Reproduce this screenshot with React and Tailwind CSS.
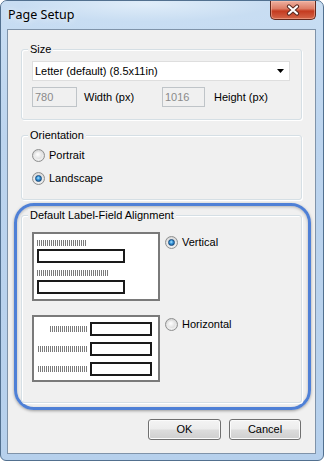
import React from "react";

const font = { fontFamily: '"Liberation Sans", Arial, sans-serif' };

function Radio({ checked }) {
  return (
    <div className="w-[13px] h-[13px] rounded-full border border-[#8e8f8f] bg-[radial-gradient(circle_at_50%_60%,#fafafa_0%,#ececec_45%,#c4c4c4_100%)] flex items-center justify-center shrink-0">
      {checked ? (
        <div className="w-[7px] h-[7px] rounded-full border border-[#174a7c] bg-[radial-gradient(circle_at_45%_40%,#aee6ff_0%,#3a98dc_40%,#0e4a86_100%)]" />
      ) : (
        <div className="w-[7px] h-[7px] rounded-full bg-[radial-gradient(circle_at_40%_35%,#ffffff_0%,#e6e6e6_60%,#d0d0d0_100%)]" />
      )}
    </div>
  );
}

function Group({ label, className, children }) {
  return (
    <div
      className={
        "relative border border-[#d5dfe5] rounded-[3px] shadow-[inset_1px_1px_0_#ffffff,1px_1px_0_#ffffff] " +
        className
      }
    >
      <div className="absolute -top-[7px] left-[6px] px-[2px] bg-[#f0f0f0] leading-[13px] text-[11px] text-black whitespace-nowrap">
        {label}
      </div>
      {children}
    </div>
  );
}

function Hatch({ w }) {
  return (
    <div
      className="h-[6px] shrink-0 bg-[repeating-linear-gradient(90deg,#7a7a7a_0px,#7a7a7a_1px,transparent_1px,transparent_2px)]"
      style={{ width: w }}
    />
  );
}

function Field({ w, h }) {
  return (
    <div
      className="border-2 border-[#1a1a1a] bg-white shrink-0"
      style={{ width: w, height: h }}
    />
  );
}

function Button({ children, w }) {
  return (
    <div
      className="h-[21px] flex items-center justify-center border border-[#707070] rounded-[3px] bg-[linear-gradient(180deg,#f4f4f4_0%,#ececec_48%,#dddddd_52%,#cfcfcf_100%)] shadow-[inset_0_0_0_1px_#fbfbfb] text-[11px] text-black"
      style={{ width: w }}
    >
      {children}
    </div>
  );
}

export default function App() {
  return (
    <div
      className="w-[324px] h-[461px] flex flex-col rounded-t-[7px] rounded-b-[6px] border border-[#52708f] bg-[linear-gradient(180deg,#c9def3_0%,#bcd4ee_30%,#b6d0ec_100%)] overflow-hidden"
      style={font}
    >
      {/* title bar */}
      <div className="h-[28px] flex items-start shrink-0 bg-[radial-gradient(ellipse_at_45%_10%,#e0edf9_0%,#c8ddf2_50%,transparent_80%)]">
        <div
          className="pl-[7px] h-[28px] flex items-center text-[12.5px] text-black"
          style={{ fontFamily: '"Noto Sans", "Open Sans", sans-serif', textShadow: "0 0 6px rgba(255,255,255,0.9)" }}
        >
          Page Setup
        </div>
        <div className="flex-1" />
        <div className="mr-[7px] w-[46px] h-[19px] flex items-center justify-center rounded-b-[5px] border border-t-0 border-[#62281d] bg-[linear-gradient(180deg,#eeb0a0_0%,#dd7d66_42%,#c43b20_56%,#d4664a_100%)] shadow-[inset_0_0_0_1px_rgba(255,200,180,0.45)]">
          <svg width="14" height="12" viewBox="0 0 14 12">
            <path d="M3 2.5 L11 9.5 M11 2.5 L3 9.5" stroke="#5a2a22" strokeWidth="4.2" strokeLinecap="round" />
            <path d="M3 2.5 L11 9.5 M11 2.5 L3 9.5" stroke="#ffffff" strokeWidth="2.2" strokeLinecap="round" />
          </svg>
        </div>
      </div>

      {/* client area */}
      <div className="ml-[6px] mr-[7px] h-[425px] border border-[#7f93a9] bg-[#f0f0f0] flex flex-col shrink-0">
        {/* Size */}
        <Group label="Size" className="ml-[13px] mt-[19px] w-[281px] h-[71px] pl-[10px] pt-[11px]">
          <div className="w-[258px] h-[20px] bg-white border border-[#dedede] flex items-center pl-[2px] pr-[5px] text-[11px] text-black">
            <span className="flex-1">Letter (default) (8.5x11in)</span>
            <svg width="7" height="4" viewBox="0 0 7 4">
              <path d="M0 0 L7 0 L3.5 4 Z" fill="#000" />
            </svg>
          </div>
          <div className="mt-[6px] h-[20px] flex items-center text-[11px]">
            <div className="w-[45px] h-[20px] border border-[#bfc4c8] bg-[#f0f0f0] flex items-center pl-[2px] text-[#8a8a8a]">
              780
            </div>
            <div className="ml-[7px] w-[78px] text-black">Width (px)</div>
            <div className="w-[43px] h-[20px] border border-[#bfc4c8] bg-[#f0f0f0] flex items-center pl-[2px] text-[#8a8a8a]">
              1016
            </div>
            <div className="ml-[9px] text-black">Height (px)</div>
          </div>
        </Group>

        {/* Orientation */}
        <Group label="Orientation" className="ml-[13px] mt-[15px] w-[281px] h-[65px] pl-[10px] pt-[13px]">
          <div className="flex items-center gap-[4px] h-[13px] text-[11px] text-black">
            <Radio checked={false} />
            <span>Portrait</span>
          </div>
          <div className="flex items-center gap-[4px] h-[13px] mt-[10px] text-[11px] text-black">
            <Radio checked />
            <span>Landscape</span>
          </div>
        </Group>

        {/* highlighted alignment section */}
        <div className="ml-[6px] mt-[3px] w-[297px] h-[207px] border-[3px] border-[#4f80d6] rounded-[20px] pl-[4px] pt-[9px] shadow-[0_1px_3px_rgba(0,0,0,0.35),inset_0_1px_3px_rgba(0,0,0,0.25)]">
          <Group label="Default Label-Field Alignment" className="w-[281px] h-[188px] pl-[10px] pt-[16px] flex flex-col gap-[14px]">
            {/* vertical */}
            <div className="flex items-start">
              <div className="w-[128px] h-[69px] border-2 border-[#7a7a7a] bg-white pl-[3px] pt-[6px] flex flex-col">
                <Hatch w={49} />
                <div className="mt-[3px]">
                  <Field w={88} h={14} />
                </div>
                <div className="mt-[7px]">
                  <Hatch w={71} />
                </div>
                <div className="mt-[4px]">
                  <Field w={88} h={14} />
                </div>
              </div>
              <div className="ml-[5px] mt-[4px] flex items-center gap-[4px] h-[13px] text-[11px] text-black">
                <Radio checked />
                <span>Vertical</span>
              </div>
            </div>
            {/* horizontal */}
            <div className="flex items-start">
              <div className="w-[128px] h-[67px] border-2 border-[#7a7a7a] bg-white pr-[6px] pt-[5px] flex flex-col gap-[6px]">
                <div className="flex items-center justify-end gap-[3px]">
                  <Hatch w={37} />
                  <Field w={62} h={14} />
                </div>
                <div className="flex items-center justify-end gap-[3px]">
                  <Hatch w={49} />
                  <Field w={62} h={14} />
                </div>
                <div className="flex items-center justify-end gap-[3px]">
                  <Hatch w={49} />
                  <Field w={62} h={14} />
                </div>
              </div>
              <div className="ml-[5px] mt-[3px] flex items-center gap-[4px] h-[13px] text-[11px] text-black">
                <Radio checked={false} />
                <span>Horizontal</span>
              </div>
            </div>
          </Group>
        </div>

        {/* buttons */}
        <div className="mt-[9px] flex justify-end gap-[8px] pr-[14px]">
          <Button w={73}>OK</Button>
          <Button w={72}>Cancel</Button>
        </div>
      </div>
    </div>
  );
}
